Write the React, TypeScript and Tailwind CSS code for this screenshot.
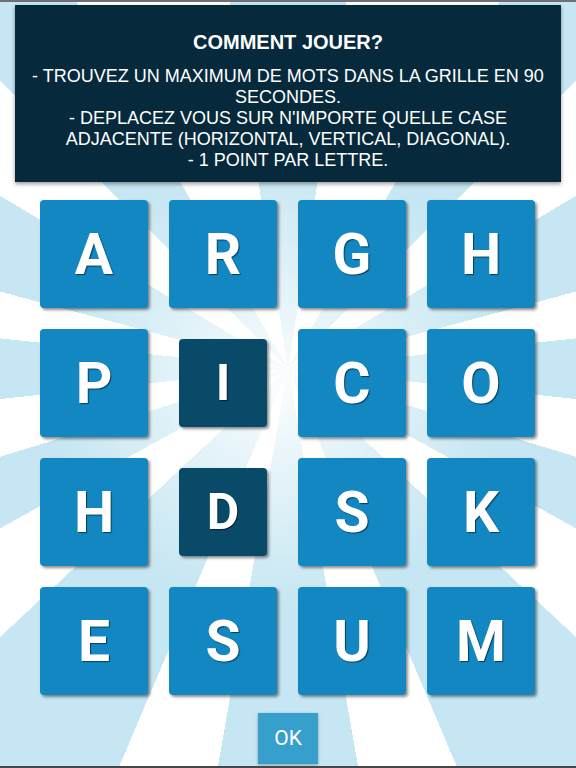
import React from 'react';

type Tile = { letter: string; picked?: boolean };

const grid: Tile[] = [
  { letter: 'A' }, { letter: 'R' }, { letter: 'G' }, { letter: 'H' },
  { letter: 'P' }, { letter: 'I', picked: true }, { letter: 'C' }, { letter: 'O' },
  { letter: 'H' }, { letter: 'D', picked: true }, { letter: 'S' }, { letter: 'K' },
  { letter: 'E' }, { letter: 'S' }, { letter: 'U' }, { letter: 'M' },
];

const rules = [
  '- TROUVEZ UN MAXIMUM DE MOTS DANS LA GRILLE EN 90',
  'SECONDES.',
  '- DEPLACEZ VOUS SUR N\'IMPORTE QUELLE CASE',
  'ADJACENTE (HORIZONTAL, VERTICAL, DIAGONAL).',
  '- 1 POINT PAR LETTRE.',
];

function LetterTile({ letter, picked }: Tile) {
  return (
    <div className="flex h-[108px] w-[108px] items-center justify-center">
      {picked ? (
        <div className="flex h-[88px] w-[88px] items-center justify-center rounded-[4px] bg-[#0a4a69] shadow-[2px_2px_3px_rgba(0,0,0,0.45)]">
          <span className="font-['Roboto',sans-serif] text-[50px] font-bold leading-none text-white [text-shadow:1px_1px_1px_rgba(0,0,0,0.55)]">
            {letter}
          </span>
        </div>
      ) : (
        <div className="flex h-[108px] w-[108px] items-center justify-center rounded-[4px] bg-[#1287c2] shadow-[2px_2px_3px_rgba(0,0,0,0.45)]">
          <span className="font-['Roboto',sans-serif] text-[57px] font-bold leading-none text-white [text-shadow:1px_1px_1px_rgba(0,0,0,0.55)]">
            {letter}
          </span>
        </div>
      )}
    </div>
  );
}

export default function App() {
  return (
    <div className="flex h-[768px] w-[576px] flex-col items-center overflow-hidden border-y-2 border-t-[#707070] border-b-[#474747] bg-[radial-gradient(circle_at_48%_50%,rgba(255,255,255,0.92)_0px,rgba(255,255,255,0.55)_90px,rgba(255,255,255,0)_230px),conic-gradient(at_50%_48%,#c5e6f2_0deg_9deg,#fff_9deg_30deg,#c5e6f2_30deg_45deg,#fff_45deg_59deg,#c5e6f2_59deg_75deg,#fff_75deg_84deg,#c5e6f2_84deg_96deg,#fff_96deg_107deg,#c5e6f2_107deg_119deg,#fff_119deg_133deg,#c5e6f2_133deg_157deg,#fff_157deg_170deg,#c5e6f2_170deg_190deg,#fff_190deg_203deg,#c5e6f2_203deg_227deg,#fff_227deg_241deg,#c5e6f2_241deg_253deg,#fff_253deg_264deg,#c5e6f2_264deg_276deg,#fff_276deg_285deg,#c5e6f2_285deg_301deg,#fff_301deg_315deg,#c5e6f2_315deg_330deg,#fff_330deg_351deg,#c5e6f2_351deg_360deg)]">
      {/* Rules panel */}
      <div className="mt-[3px] h-[177px] w-[546px] shrink-0 bg-[#062a3c] pt-[26px] text-center font-['Liberation_Sans',Arial,sans-serif] text-white shadow-[0_2px_4px_rgba(0,0,0,0.4)]">
        <h1 className="text-[20px] font-bold leading-[23px]">COMMENT JOUER?</h1>
        <div className="mt-[12px] text-[18px] leading-[21px]">
          {rules.map((line, i) => (
            <p key={i} className="whitespace-nowrap">{line}</p>
          ))}
        </div>
      </div>

      {/* Letter grid */}
      <div className="mt-[18px] grid w-full grid-cols-[repeat(4,108px)] gap-[21px] pl-[40px]">
        {grid.map((t, i) => (
          <LetterTile key={i} {...t} />
        ))}
      </div>

      <button className="mt-[18px] flex h-[51px] w-[60px] items-center justify-center bg-[#379fcb] font-['Roboto',sans-serif] text-[21px] text-white shadow-[0_1px_3px_rgba(0,0,0,0.3)]">
        OK
      </button>
    </div>
  );
}
